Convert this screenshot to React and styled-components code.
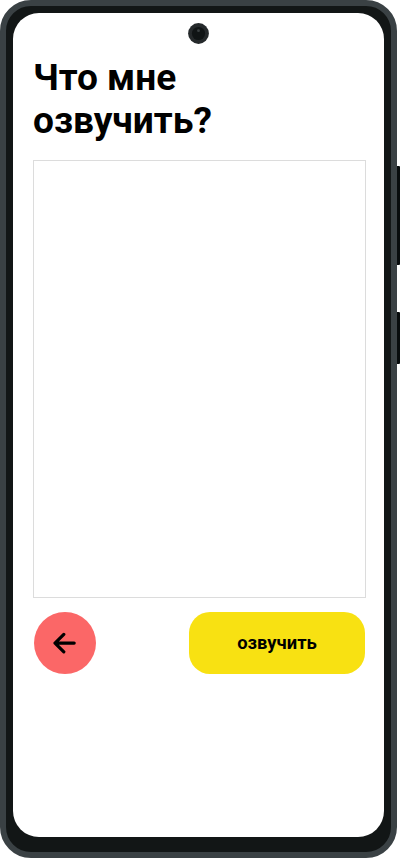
import React from "react";
import styled, { createGlobalStyle } from "styled-components";

const GlobalStyle = createGlobalStyle`
  * { box-sizing: border-box; }
  body { margin: 0; background: #fff; overflow: hidden; }
`;

const Stage = styled.div`
  position: relative;
  width: 400px;
  height: 858px;
  font-family: Roboto, sans-serif;
  color: #000;
`;

const SideKey = styled.span`
  position: absolute;
  left: 396px;
  top: ${(p) => p.$top}px;
  width: 4px;
  height: ${(p) => p.$height}px;
  background: #080c0d;
  border-radius: 0 1px 1px 0;
`;

const Device = styled.div`
  position: relative;
  width: 397px;
  height: 858px;
  padding: 7px 7px 15px;
  border: 6px solid #3a4144;
  border-radius: 31px;
  background: #121616;
`;

const Camera = styled.svg`
  position: absolute;
  left: 182px;
  top: 17px;
  width: 21px;
  height: 21px;
`;

const Screen = styled.main`
  display: flex;
  flex-direction: column;
  width: 371px;
  height: 824px;
  padding: 43px 18px 0 20px;
  border-radius: 26px;
  background: #fff;
`;

const Title = styled.h1`
  margin: 0 0 18px;
  font-size: 37.1px;
  line-height: 43px;
  font-weight: 700;
  letter-spacing: -0.02px;
`;

const TextInput = styled.textarea`
  display: block;
  width: 333px;
  height: 438px;
  margin: 0;
  padding: 10px;
  border: 1px solid #dcdcdc;
  border-radius: 0;
  background: #fff;
  font: 400 18px Roboto, sans-serif;
  resize: none;
  outline: none;
`;

const Actions = styled.div`
  display: flex;
  justify-content: space-between;
  width: 332px;
  margin: 14px 0 0;
  padding-left: 1px;
`;

const Button = styled.button`
  display: flex;
  align-items: center;
  justify-content: center;
  height: 62px;
  padding: 0;
  border: 0;
  color: #000;
`;

const BackButton = styled(Button)`
  width: 62px;
  border-radius: 50%;
  background: #fb6767;
`;

const SpeakButton = styled(Button)`
  width: 176px;
  padding-bottom: 2px;
  border-radius: 21px;
  background: #f8e112;
  font: 700 18.4px Roboto, sans-serif;
`;

const ArrowLeft = () => (
  <svg width="24" height="24" viewBox="0 0 24 24" fill="none" stroke="#000" strokeWidth="3.2" strokeLinecap="round" strokeLinejoin="round">
    <path d="M21.2 12.1H2M10.8 3.4L2 12.1l8.8 8.7" />
  </svg>
);

export default function App() {
  return (
    <>
      <GlobalStyle />
      <Stage>
        <SideKey $top={166} $height={99} />
        <SideKey $top={312} $height={52} />
        <Device>
          <Screen>
            <Title>
              Что мне
              <br />
              озвучить?
            </Title>
            <TextInput aria-label="Что мне озвучить?" />
            <Actions>
              <BackButton aria-label="Назад">
                <ArrowLeft />
              </BackButton>
              <SpeakButton>озвучить</SpeakButton>
            </Actions>
          </Screen>
          <Camera viewBox="0 0 21 21">
            <circle cx="10.5" cy="10.5" r="10.4" fill="#25292b" />
            <circle cx="10.5" cy="10.5" r="6.6" fill="#101415" />
            <circle cx="10.5" cy="7.7" r="1.4" fill="#3a3f41" />
          </Camera>
        </Device>
      </Stage>
    </>
  );
}
